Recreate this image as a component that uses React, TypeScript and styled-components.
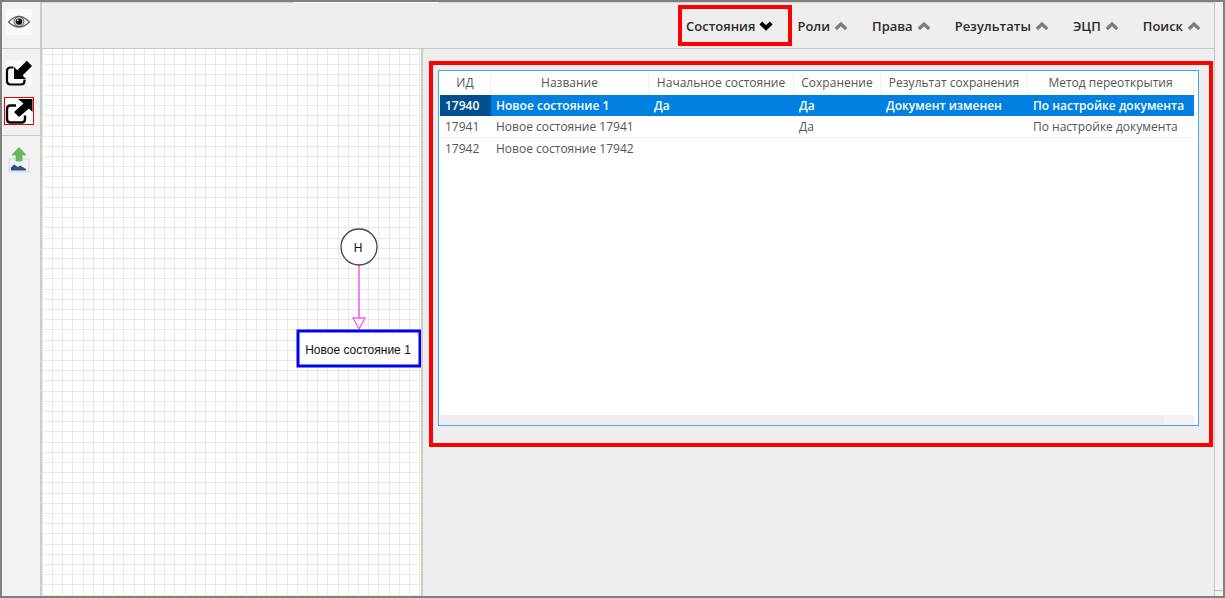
import React from "react";
import styled, { createGlobalStyle, css } from "styled-components";

const GlobalStyle = createGlobalStyle`
  *, *::before, *::after { box-sizing: border-box; }
  body { margin: 0; background: #eee; font-family: "Open Sans", sans-serif; color: #333; }
  button { font: inherit; color: inherit; background: none; border: 0; padding: 0; cursor: pointer; }
`;

const Shell = styled.div`
  display: flex;
  min-height: 100vh;
  border: 2px solid #808080;
  background: #eee;
`;

const Sidebar = styled.aside`
  flex: none;
  width: 40px;
  background: #f2f2f2;
  border-right: 2px solid #cbcbcb;
`;

const ToolGroup = styled.div<{ $divider?: boolean }>`
  display: flex;
  flex-direction: column;
  align-items: flex-start;
  gap: 10px;
  padding: 10px 2px;
  ${(p) => p.$divider && css`border-bottom: 1px solid #c8c8c8;`}
  &:first-child { padding: 6px 2px 12px; }
`;

const ToolButton = styled.button<{ $active?: boolean }>`
  display: flex;
  align-items: center;
  justify-content: center;
  width: 30px;
  height: 28px;
  ${(p) => p.$active && css`border: 1px solid #f00000;`}
`;

const Main = styled.main`
  flex: 1;
  min-width: 0;
  display: flex;
  flex-direction: column;
`;

const TopBar = styled.nav`
  position: relative;
  display: flex;
  align-items: center;
  justify-content: flex-end;
  gap: 24px;
  height: 47px;
  padding: 0 13px 0 0;
  border-bottom: 1px solid #c8c8c8;
  border-top: 1px solid #d4d4d4;
  &::before {
    content: "";
    position: absolute;
    top: -1px;
    left: 251px;
    width: 146px;
    height: 1px;
    background: #fff;
  }
`;

const TabButton = styled.button<{ $open?: boolean }>`
  position: relative;
  display: flex;
  align-items: center;
  gap: 4px;
  font-size: 13px;
  line-height: 18px;
  font-weight: 600;
  white-space: nowrap;
  color: #2b2b2b;
  ${(p) =>
    p.$open &&
    css`
      &::after {
        content: "";
        position: absolute;
        inset: -12px -19px -11px -8px;
        border: 4px solid #ff0000;
      }
    `}
`;

const Workspace = styled.div`
  flex: 1;
  display: flex;
`;

const Canvas = styled.section`
  position: relative;
  flex: none;
  width: 381px;
  background: #fff;
  border-right: 2px solid #cbcbcb;
`;

const Diagram = styled.svg`
  position: absolute;
  inset: 0;
  width: 100%;
  height: 100%;
  font-family: "Liberation Sans", Arial, sans-serif;
`;

const Details = styled.section`
  flex: 1;
  min-width: 0;
  padding: 12px 1px 0 6px;
`;

const Highlight = styled.div`
  border: 4px solid #ff0000;
  padding: 5px 10px 17px 5px;
`;

const TableBox = styled.div`
  display: flex;
  flex-direction: column;
  min-height: 356px;
  padding: 0 4px 0 1px;
  border: 1px solid #4aa5ee;
  background: #fff;
`;

const Grid = styled.table`
  width: 100%;
  table-layout: fixed;
  border-collapse: separate;
  border-spacing: 0;
  font-size: 12px;
  line-height: 16px;
  color: #555;
`;

const HeadCell = styled.th`
  height: 24px;
  padding: 0;
  font-weight: 400;
  text-align: center;
  white-space: nowrap;
  border-right: 1px solid #f2f2f2;
`;

const Row = styled.tr<{ $selected?: boolean }>`
  ${(p) =>
    p.$selected &&
    css`
      background: #0080e0;
      color: #fff;
      font-weight: 600;
      td:first-child { background: #00508f; }
    `}
`;

const Cell = styled.td`
  height: 21px;
  padding: 0 0 0 5px;
  white-space: nowrap;
  ${Row} + ${Row} > & {
    height: 22px;
    border-bottom: 1px solid #f0f3f4;
  }
  ${Row}:last-child > & { border-bottom: 0; }
`;

const ScrollTrack = styled.div`
  margin-top: auto;
  height: 10px;
  background: #f2f2f2;
`;

const ScrollThumb = styled.div`
  width: 96%;
  height: 100%;
  background: #ededed;
`;

const Gutter = styled.div`
  flex: none;
  display: flex;
  flex-direction: column;
  justify-content: flex-end;
  width: 9px;
  padding-bottom: 5px;
  background: #f2f2f2;
  border-left: 1px solid #c4c4c4;
`;

const GutterLine = styled.div`
  height: 1px;
  background: #bdbdbd;
`;

const Chevron = ({ down }: { down?: boolean }) => (
  <svg width="14" height="12" viewBox="0 0 14 12" aria-hidden="true">
    <path
      d={down ? "M1.8 3 7 8 12.2 3" : "M1.8 9 7 4 12.2 9"}
      fill="none"
      stroke={down ? "#000" : "#7d7d7d"}
      strokeWidth={down ? 4 : 3.4}
    />
  </svg>
);

const EyeIcon = () => (
  <svg width="26" height="26" viewBox="0 0 26 26" aria-hidden="true">
    <rect width="26" height="26" fill="#fafafa" />
    <path d="M2.5 13Q13 2 23.5 13Q13 23 2.5 13Z" fill="#fff" stroke="#666" strokeWidth="1.3" />
    <circle cx="13" cy="12.6" r="5" fill="#c8c8c8" stroke="#555" />
    <circle cx="13" cy="12.6" r="3.2" fill="#111" />
    <circle cx="11.8" cy="11.2" r="0.9" fill="#ddd" />
  </svg>
);

const ImportIcon = () => (
  <svg width="28" height="28" viewBox="0 0 28 28" aria-hidden="true">
    <rect x="1" y="1" width="26" height="26" fill="#fafafa" />
    <path d="M8.5 8.5H5.5Q2 8.5 2 12V22Q2 25.5 5.5 25.5H16Q19.5 25.5 19.5 22V20.5" fill="none" stroke="#000" strokeWidth="2.2" />
    <path d="M9 8 12.3 11.3 21.8 1.8 27 7 17.6 16.6 21 20H9Z" fill="#000" />
  </svg>
);

const ExportIcon = () => (
  <svg width="28" height="26" viewBox="0 0 28 26" aria-hidden="true">
    <rect width="28" height="26" fill="#fff" />
    <path d="M11 7.5H5.5Q2 7.5 2 11V21Q2 24.5 5.5 24.5H16.5Q20 24.5 20 21V17.5" fill="none" stroke="#000" strokeWidth="2.4" />
    <path d="M13 1H27.5V14L24 10.5 14 19 9 14 18.5 5.5Z" fill="#000" />
  </svg>
);

const UploadIcon = () => (
  <svg width="22" height="26" viewBox="0 0 22 26" aria-hidden="true">
    <rect x="1" y="12" width="20" height="13" fill="#edf3f8" stroke="#d0d9df" />
    <path d="M3 23.5V20.5L6 17.5 10 20 12 18.5 18 22V23.5Z" fill="#2f527f" />
    <path d="M11 .5 18 8H14V14H8V8H4Z" fill="#68b85c" stroke="#57a84d" strokeWidth=".6" />
  </svg>
);

const tabs = ["Состояния", "Роли", "Права", "Результаты", "ЭЦП", "Поиск"];

const columns = [
  { title: "ИД", width: 51 },
  { title: "Название", width: 158 },
  { title: "Начальное состояние", width: 145 },
  { title: "Сохранение", width: 87 },
  { title: "Результат сохранения", width: 147 },
  { title: "Метод переоткрытия", width: 0 },
];

const rows = [
  ["17940", "Новое состояние 1", "Да", "Да", "Документ изменен", "По настройке документа"],
  ["17941", "Новое состояние 17941", "", "Да", "", "По настройке документа"],
  ["17942", "Новое состояние 17942", "", "", "", ""],
];

export default function App() {
  return (
    <>
      <GlobalStyle />
      <Shell>
        <Sidebar>
          <ToolGroup $divider>
            <ToolButton aria-label="Просмотр"><EyeIcon /></ToolButton>
          </ToolGroup>
          <ToolGroup $divider>
            <ToolButton aria-label="Свернуть"><ImportIcon /></ToolButton>
            <ToolButton aria-label="Развернуть" $active><ExportIcon /></ToolButton>
          </ToolGroup>
          <ToolGroup>
            <ToolButton aria-label="Загрузить"><UploadIcon /></ToolButton>
          </ToolGroup>
        </Sidebar>
        <Main>
          <TopBar>
            {tabs.map((tab, i) => (
              <TabButton key={tab} $open={i === 0} aria-expanded={i === 0}>
                {tab}
                <Chevron down={i === 0} />
              </TabButton>
            ))}
          </TopBar>
          <Workspace>
            <Canvas>
              <Diagram>
                <defs>
                  <pattern id="grid" x="0" y="5" width="51" height="51" patternUnits="userSpaceOnUse">
                    <path
                      d="M0 0.5H51M0 10.5H51M0 20.5H51M0 31.5H51M0 41.5H51M10.5 0V51M20.5 0V51M30.5 0V51M41.5 0V51M0.5 0V51"
                      stroke="#e4edd9"
                    />
                  </pattern>
                </defs>
                <rect width="100%" height="100%" fill="url(#grid)" />
                <path d="M317 216V269" stroke="#ff7bf4" strokeWidth="2" />
                <path d="M311 269H323L317 280Z" fill="#fff" stroke="#ff5cf0" strokeWidth="1.4" />
                <circle cx="317" cy="198" r="18" fill="#fff" stroke="#444" strokeWidth="1.3" />
                <text x="316" y="203" textAnchor="middle" fontSize="12" fill="#111">Н</text>
                <rect x="256" y="282" width="122" height="35" fill="#fff" stroke="#0000f5" strokeWidth="3" />
                <text x="316" y="305" textAnchor="middle" fontSize="12" fill="#111">Новое состояние 1</text>
              </Diagram>
            </Canvas>
            <Details>
              <Highlight>
                <TableBox>
                  <Grid>
                    <colgroup>
                      {columns.map((c) => (
                        <col key={c.title} width={c.width || undefined} />
                      ))}
                    </colgroup>
                    <thead>
                      <tr>
                        {columns.map((c) => (
                          <HeadCell key={c.title} scope="col">{c.title}</HeadCell>
                        ))}
                      </tr>
                    </thead>
                    <tbody>
                      {rows.map((r, i) => (
                        <Row key={r[0]} $selected={i === 0}>
                          {r.map((value, j) => (
                            <Cell key={j}>{value}</Cell>
                          ))}
                        </Row>
                      ))}
                    </tbody>
                  </Grid>
                  <ScrollTrack>
                    <ScrollThumb />
                  </ScrollTrack>
                </TableBox>
              </Highlight>
            </Details>
          </Workspace>
        </Main>
        <Gutter>
          <GutterLine />
        </Gutter>
      </Shell>
    </>
  );
}
